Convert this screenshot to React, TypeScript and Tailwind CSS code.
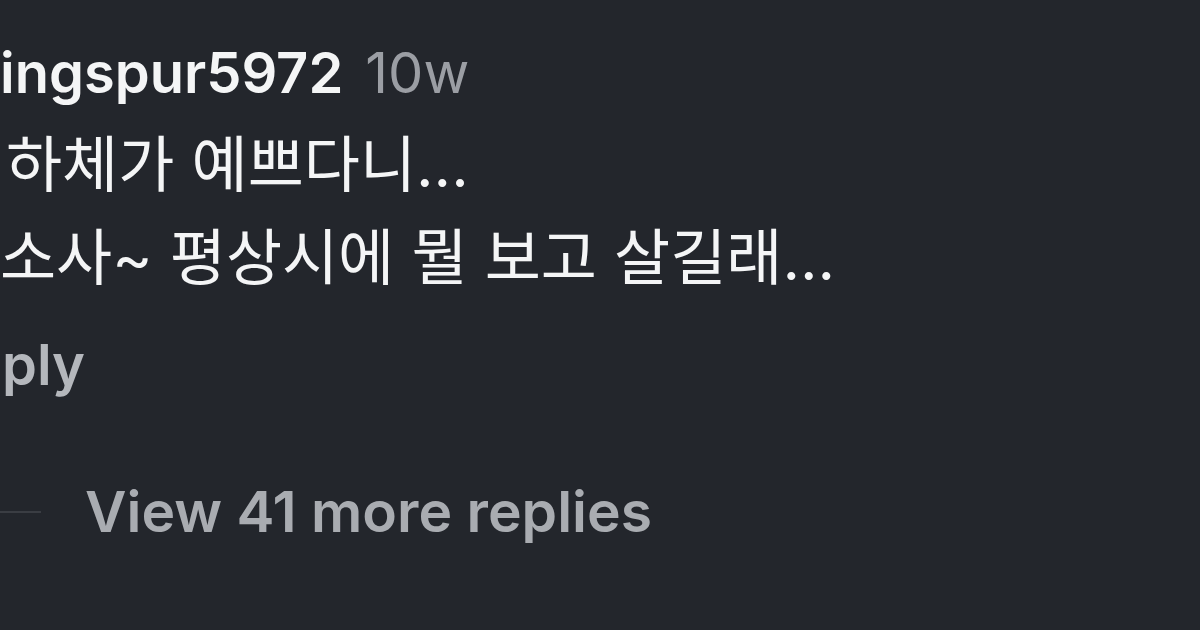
export default function App() {
  const font = { fontFamily: 'Inter, "Noto Sans CJK KR", "Noto Sans", sans-serif' };
  return (
    <div className="w-[1200px] h-[630px] bg-[#23262c] overflow-hidden relative" style={font}>
      <div className="flex flex-col pt-[38px]">
        <div className="flex items-baseline gap-[22px] pl-0 h-[70px] text-[56px] leading-[70px]">
          <span className="font-semibold text-[#f4f5f6] tracking-[0px]">ingspur5972</span>
          <span className="font-normal text-[#9b9ea4]">10w</span>
        </div>
        <div className="mt-[11px] pl-[6px] text-[61px] leading-[93px] text-[#f4f5f6] font-normal">
          하체가 예쁘다니...
        </div>
        <div className="pl-0 text-[61px] leading-[93px] text-[#f4f5f6] font-normal">
          소사~ 평상시에 뭘 보고 살길래...
        </div>
        <div className="mt-[25px] pl-[2px] text-[56px] leading-[70px] font-semibold text-[#b4b7bc]">ply</div>
        <div className="mt-[77px] flex items-center h-[70px]">
          <div className="w-[41px] h-[2px] bg-[#3a3d43]" />
          <span className="ml-[44px] text-[57px] leading-[70px] font-semibold text-[#a9acb1]">View 41 more replies</span>
        </div>
      </div>
    </div>
  );
}
